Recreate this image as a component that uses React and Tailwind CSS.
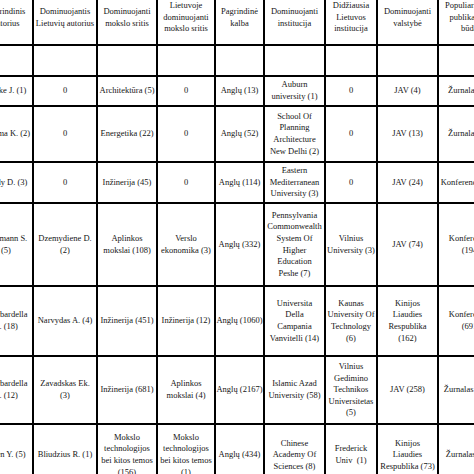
import React from "react";

const widths = [54, 64, 60, 58, 49, 61, 52, 61, 66];

const header = [
  ["Pagrindinis", "autorius"],
  ["Dominuojantis", "Lietuvių autorius"],
  ["Dominuojanti", "mokslo sritis"],
  ["Lietuvoje", "dominuojanti", "mokslo sritis"],
  ["Pagrindinė", "kalba"],
  ["Dominuojanti", "institucija"],
  ["Didžiausia", "Lietuvos", "institucija"],
  ["Dominuojanti", "valstybė"],
  ["Populiariausias", "publikavimo", "būdas"],
];

const rows = [
  {
    h: "h-[30px]",
    cells: [
      ["Boske J. (1)"],
      ["0"],
      ["Architektūra (5)"],
      ["0"],
      ["Anglų (13)"],
      ["Auburn", "university (1)"],
      ["0"],
      ["JAV (4)"],
      ["Žurnalas (10)"],
    ],
  },
  {
    h: "h-[56px]",
    cells: [
      ["Sharma K. (2)"],
      ["0"],
      ["Energetika (22)"],
      ["0"],
      ["Anglų (52)"],
      ["School Of", "Planning", "Architecture", "New Delhi (2)"],
      ["0"],
      ["JAV (13)"],
      ["Žurnalas (41)"],
    ],
  },
  {
    h: "h-[41px]",
    cells: [
      ["Vardy D. (3)"],
      ["0"],
      ["Inžinerija (45)"],
      ["0"],
      ["Anglų (114)"],
      ["Eastern", "Mediterranean", "University (3)"],
      ["0"],
      ["JAV (24)"],
      ["Konferencija (62)"],
    ],
  },
  {
    h: "h-[83px]",
    cells: [
      ["Hellmann S.", "(5)"],
      ["Dzemydiene D.", "(2)"],
      ["Aplinkos", "mokslai (108)"],
      ["Verslo", "ekonomika (3)"],
      ["Anglų (332)"],
      ["Pennsylvania", "Commonwealth", "System Of", "Higher", "Education", "Peshe (7)"],
      ["Vilnius", "University (3)"],
      ["JAV (74)"],
      ["Konferencija", "(194)"],
    ],
  },
  {
    h: "h-[70px]",
    cells: [
      ["Sbarbardella", "L. (18)"],
      ["Narvydas A. (4)"],
      ["Inžinerija (451)"],
      ["Inžinerija (12)"],
      ["Anglų (1060)"],
      ["Universita", "Della", "Campania", "Vanvitelli (14)"],
      ["Kaunas", "University Of", "Technology", "(6)"],
      ["Kinijos", "Liaudies", "Respublika", "(162)"],
      ["Konferencija", "(691)"],
    ],
  },
  {
    h: "h-[68px]",
    cells: [
      ["Sbarbardella", "L. (12)"],
      ["Zavadskas Ek.", "(3)"],
      ["Inžinerija (681)"],
      ["Aplinkos", "mokslai (4)"],
      ["Anglų (2167)"],
      ["Islamic Azad", "University (58)"],
      ["Vilnius", "Gedimino", "Technikos", "Universitetas", "(5)"],
      ["JAV (258)"],
      ["Žurnalas (1405)"],
    ],
  },
  {
    h: "h-[62px]",
    cells: [
      ["Chen Y. (5)"],
      ["Bliudzius R. (1)"],
      ["Mokslo", "technologijos", "bei kitos temos", "(156)"],
      ["Mokslo", "technologijos", "bei kitos temos", "(1)"],
      ["Anglų (434)"],
      ["Chinese", "Academy Of", "Sciences (8)"],
      ["Frederick", "Univ  (1)"],
      ["Kinijos", "Liaudies", "Respublika (73)"],
      ["Žurnalas (261)"],
    ],
  },
];

function Cell({ lines }) {
  return (
    <td className="border-[2.5px] border-black text-center align-middle px-0 py-0 whitespace-nowrap">
      {lines.map((l, i) => (
        <div key={i} className="whitespace-pre">
          {l}
        </div>
      ))}
    </td>
  );
}

export default function App() {
  return (
    <div className="w-[474px] h-[474px] overflow-hidden bg-white">
      <table className="table-fixed border-collapse -ml-[22px] -mt-[11px] w-[525px] font-['Liberation_Serif',serif] text-[8.5px] leading-[11.6px] text-[#151515]">
        <colgroup>
          {widths.map((w, i) => (
            <col key={i} style={{ width: w }} />
          ))}
        </colgroup>
        <tbody>
          <tr className="h-[55px]">
            {header.map((c, i) => (
              <Cell key={i} lines={c} />
            ))}
          </tr>
          <tr className="h-[31px]">
            {header.map((_, i) => (
              <td key={i} className="border-[2.5px] border-black"></td>
            ))}
          </tr>
          {rows.map((r, ri) => (
            <tr key={ri} className={r.h}>
              {r.cells.map((c, i) => (
                <Cell key={i} lines={c} />
              ))}
            </tr>
          ))}
        </tbody>
      </table>
    </div>
  );
}
